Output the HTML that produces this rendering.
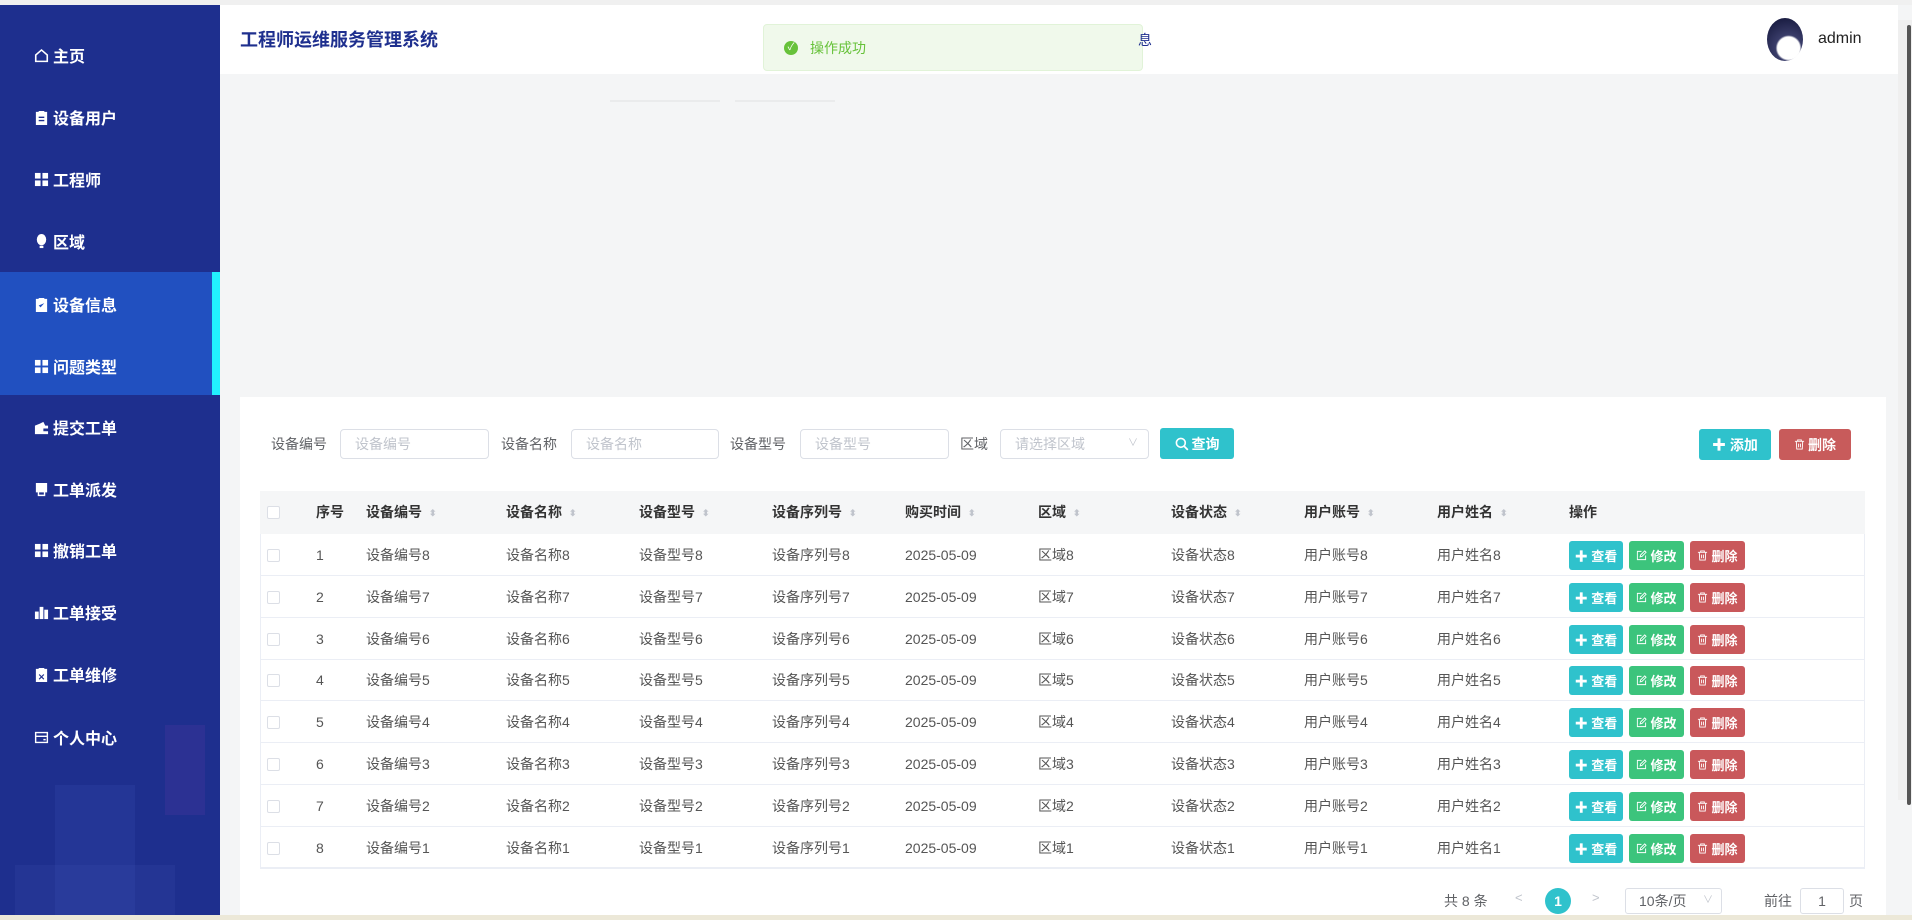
<!DOCTYPE html>
<html><head><meta charset="utf-8">
<style>
*{margin:0;padding:0;box-sizing:border-box}
body{width:1912px;height:920px;overflow:hidden;background:#f4f5f6;font-family:"Liberation Sans","Noto Sans CJK SC",sans-serif;position:relative;font-size:14px;color:#606266}
.a{position:absolute}
.mi{position:absolute;left:0;width:220px;height:30px;color:#fff;font-size:16px;font-weight:bold;display:flex;align-items:center;padding-left:34px;white-space:nowrap}
.mi svg{width:15px;height:15px;margin-right:4px;fill:#fff;flex:none}
.inp{position:absolute;top:429px;height:30px;border:1px solid #dcdfe6;border-radius:4px;background:#fff;color:#c0c4cc;font-size:14px;line-height:28px;padding-left:14px;white-space:nowrap}
.lbl{position:absolute;top:429px;font-size:14px;color:#606266;line-height:30px;white-space:nowrap}
.btn{position:absolute;color:#fff;border-radius:3px;font-weight:bold;font-size:14px;display:flex;align-items:center;justify-content:center;white-space:nowrap}
.th{position:absolute;top:503px;font-weight:bold;color:#333;font-size:14px;line-height:18px;white-space:nowrap}
.td{position:absolute;font-size:14px;color:#555;white-space:nowrap;line-height:18px}
.sm{position:absolute;height:29px;border-radius:3px;color:#fff;font-size:13px;font-weight:bold;display:flex;align-items:center;justify-content:center;white-space:nowrap}
.sm svg,.btn svg{width:11px;height:11px;margin-right:3px}
.cb{position:absolute;left:267px;width:13px;height:13px;border:1px solid #dcdfe6;border-radius:2px;background:#fff}
.s{display:inline-block;margin-left:7px;color:#c0c4cc;font-size:9px;vertical-align:1px}
</style></head><body>
<div class="a" style="left:0;top:0;width:1912px;height:5px;background:#f0f0f0"></div>
<div class="a" style="left:0;top:915px;width:1912px;height:5px;background:#ece8d8"></div>
<!-- sidebar -->
<div class="a" style="left:0;top:5px;width:220px;height:910px;background:#1e2f8e;overflow:hidden">
  <div class="a" style="left:0;top:267px;width:220px;height:123px;background:#2150c0"></div>
  <div class="a" style="left:212px;top:267px;width:8px;height:123px;background:#22f0ff"></div>
  <div class="a" style="left:55px;top:780px;width:80px;height:130px;background:rgba(80,100,200,.14)"></div>
  <div class="a" style="left:15px;top:860px;width:160px;height:50px;background:rgba(80,100,200,.12)"></div>
  <div class="a" style="left:165px;top:720px;width:40px;height:90px;background:rgba(110,60,170,.18)"></div>
</div>
<div class="mi" style="top:40px"><svg viewBox="0 0 16 16"><path d="M8 1L15 7V15H1V7ZM2.7 7.8V13.4H13.3V7.8L8 3.2Z" fill-rule="evenodd"/></svg>主页</div>
<div class="mi" style="top:102px"><svg viewBox="0 0 16 16"><path d="M2 2H5V1H11V2H14V16H2ZM5 7H11V8.5H5ZM5 10.5H11V12H5Z" fill-rule="evenodd"/></svg>设备用户</div>
<div class="mi" style="top:164px"><svg viewBox="0 0 16 16"><rect x="1" y="1" width="6" height="6"/><rect x="9" y="1" width="6" height="6"/><rect x="1" y="9" width="6" height="6"/><rect x="9" y="9" width="6" height="6"/></svg>工程师</div>
<div class="mi" style="top:226px"><svg viewBox="0 0 16 16"><ellipse cx="8" cy="6" rx="5" ry="6"/><rect x="6" y="12.5" width="4" height="2.5"/></svg>区域</div>
<div class="mi" style="top:289px"><svg viewBox="0 0 16 16"><path d="M2 2H5V1H11V2H14V16H2ZM5 9L7 11L11 6.5" fill-rule="evenodd"/></svg>设备信息</div>
<div class="mi" style="top:351px"><svg viewBox="0 0 16 16"><rect x="1" y="1" width="6" height="6"/><rect x="9" y="1" width="6" height="6"/><rect x="1" y="9" width="6" height="6"/><rect x="9" y="9" width="6" height="6"/></svg>问题类型</div>
<div class="mi" style="top:412px"><svg viewBox="0 0 16 16"><path d="M1 6H12L10 2L6 4ZM1 6H15V15H1ZM10 9H15V12H10Z" fill-rule="evenodd"/></svg>提交工单</div>
<div class="mi" style="top:474px"><svg viewBox="0 0 16 16"><path d="M2 1H14V11H2ZM4 11V15H12V11H10.5V13.5H5.5V11Z"/></svg>工单派发</div>
<div class="mi" style="top:535px"><svg viewBox="0 0 16 16"><rect x="1" y="1" width="6" height="6"/><rect x="9" y="1" width="6" height="6"/><rect x="1" y="9" width="6" height="6"/><rect x="9" y="9" width="6" height="6"/></svg>撤销工单</div>
<div class="mi" style="top:597px"><svg viewBox="0 0 16 16"><rect x="1" y="7" width="4" height="8"/><rect x="6" y="2" width="4" height="13"/><rect x="11" y="5" width="4" height="10"/></svg>工单接受</div>
<div class="mi" style="top:659px"><svg viewBox="0 0 16 16"><path d="M2 2H5V1H11V2H14V16H2Z"/><path d="M5.5 8L10.5 13M10.5 8L5.5 13" stroke="#1e2f8e" stroke-width="1.2"/></svg>工单维修</div>
<div class="mi" style="top:722px"><svg viewBox="0 0 16 16"><path d="M1 2H15V14H1ZM2.5 3.5V6H13.5V3.5ZM2.5 7.5V12.5H13.5V7.5ZM10 9.5H12.5V11H10Z" fill-rule="evenodd"/></svg>个人中心</div>

<!-- header -->
<div class="a" style="left:220px;top:5px;width:1678px;height:69px;background:#fff"></div>
<div class="a" style="left:240px;top:28px;font-size:18px;font-weight:bold;color:#1e2f8e;line-height:24px">工程师运维服务管理系统</div>
<div class="a" style="left:1767px;top:18px;width:36px;height:43px;border-radius:50%;background:radial-gradient(circle at 60% 70%,#fff 0 30%,#3a3d6a 35%,#1b1e44 80%)"></div>
<div class="a" style="left:1818px;top:30px;font-size:16px;color:#222">admin</div>
<div class="a" style="left:1898px;top:20px;width:14px;height:780px;background:#efefef"></div>
<div class="a" style="left:1907px;top:25px;width:4px;height:780px;background:#555;border-radius:2px"></div>
<div class="a" style="left:610px;top:100px;width:110px;height:2px;background:#eaebec"></div>
<div class="a" style="left:735px;top:100px;width:100px;height:2px;background:#eaebec"></div>

<!-- toast -->
<div class="a" style="left:763px;top:24px;width:380px;height:47px;background:#f0f9eb;border:1px solid #e1f3d8;border-radius:4px"></div>
<div class="a" style="left:784px;top:41px;width:14px;height:14px;border-radius:50%;background:#67c23a;color:#fff;font-size:10px;line-height:14px;text-align:center">✓</div>
<div class="a" style="left:810px;top:38px;font-size:14px;color:#67c23a">操作成功</div>
<div class="a" style="left:1138px;top:30px;font-size:14px;color:#1e2f8e">息</div>

<!-- card -->
<div class="a" style="left:240px;top:397px;width:1646px;height:518px;background:#fff"></div>
<div class="lbl" style="left:271px">设备编号</div><div class="inp" style="left:340px;width:149px">设备编号</div>
<div class="lbl" style="left:501px">设备名称</div><div class="inp" style="left:571px;width:148px">设备名称</div>
<div class="lbl" style="left:730px">设备型号</div><div class="inp" style="left:800px;width:149px">设备型号</div>
<div class="lbl" style="left:960px">区域</div><div class="inp" style="left:1000px;width:149px">请选择区域<span style="position:absolute;right:10px;font-size:10px">∨</span></div>
<div class="btn" style="left:1160px;top:428px;width:74px;height:31px;background:#2fc2cc"><svg viewBox="0 0 12 12" style="width:14px;height:14px"><circle cx="5" cy="5" r="3.8" fill="none" stroke="#fff" stroke-width="1.4"/><path d="M8 8L11 11" stroke="#fff" stroke-width="1.5"/></svg>查询</div>
<div class="btn" style="left:1699px;top:429px;width:72px;height:31px;background:#2fc2cc">✚ 添加</div>
<div class="btn" style="left:1779px;top:429px;width:72px;height:31px;background:#c85b5b"><svg viewBox="0 0 12 12"><path d="M1 2.5H11M4 2.5V1H8V2.5M2.5 2.5L3 11H9L9.5 2.5M5 5V9M7 5V9" fill="none" stroke="#fff" stroke-width="1"/></svg>删除</div>

<!-- table -->
<div class="a" style="left:260px;top:491px;width:1605px;height:377px;border:1px solid #ebeef5;border-top:none"></div>
<div class="a" style="left:260px;top:491px;width:1605px;height:43px;background:#f5f6f7"></div>
<div class="cb" style="top:506px"></div>
<div class="th" style="left:316px">序号</div>
<div class="th" style="left:366px">设备编号<span class="s">⬍</span></div>
<div class="th" style="left:506px">设备名称<span class="s">⬍</span></div>
<div class="th" style="left:639px">设备型号<span class="s">⬍</span></div>
<div class="th" style="left:772px">设备序列号<span class="s">⬍</span></div>
<div class="th" style="left:905px">购买时间<span class="s">⬍</span></div>
<div class="th" style="left:1038px">区域<span class="s">⬍</span></div>
<div class="th" style="left:1171px">设备状态<span class="s">⬍</span></div>
<div class="th" style="left:1304px">用户账号<span class="s">⬍</span></div>
<div class="th" style="left:1437px">用户姓名<span class="s">⬍</span></div>
<div class="th" style="left:1569px">操作</div>

<div id="rows"></div>
<script>
var h='';
var trash='<svg viewBox="0 0 12 12"><path d="M1 2.5H11M4 2.5V1H8V2.5M2.5 2.5L3 11H9L9.5 2.5M5 5V9M7 5V9" fill="none" stroke="#fff" stroke-width="1"/></svg>';
var edit='<svg viewBox="0 0 12 12"><path d="M6 1.5H1.5V10.5H10.5V6M4.5 7.5L5 5.5L9.5 1L11 2.5L6.5 7Z" fill="none" stroke="#fff" stroke-width="1"/></svg>';
for(var i=0;i<8;i++){
 var t=534+i*41.8, n=8-i, c=t+21;
 h+='<div class="a" style="left:260px;top:'+(t+41)+'px;width:1605px;height:1px;background:#ebeef5"></div>';
 h+='<div class="cb" style="top:'+(c-6)+'px"></div>';
 var cols=[[316,i+1],[366,'设备编号'+n],[506,'设备名称'+n],[639,'设备型号'+n],[772,'设备序列号'+n],[905,'2025-05-09'],[1038,'区域'+n],[1171,'设备状态'+n],[1304,'用户账号'+n],[1437,'用户姓名'+n]];
 cols.forEach(function(x){h+='<div class="td" style="left:'+x[0]+'px;top:'+(c-9)+'px">'+x[1]+'</div>';});
 h+='<div class="sm" style="left:1569px;top:'+(c-14)+'px;width:54px;background:#2fc2cc">✚ 查看</div>';
 h+='<div class="sm" style="left:1629px;top:'+(c-14)+'px;width:55px;background:#3cc47c">'+edit+'修改</div>';
 h+='<div class="sm" style="left:1690px;top:'+(c-14)+'px;width:55px;background:#c9585b">'+trash+'删除</div>';
}
document.getElementById('rows').innerHTML=h;
</script>

<!-- pagination -->
<div class="a" style="left:1444px;top:891px;font-size:14px;color:#606266">共 8 条</div>
<div class="a" style="left:1515px;top:890px;font-size:13px;color:#c0c4cc">&lt;</div>
<div class="a" style="left:1545px;top:888px;width:26px;height:26px;border-radius:50%;background:#2fc2cc;color:#fff;font-weight:bold;font-size:14px;line-height:26px;text-align:center">1</div>
<div class="a" style="left:1592px;top:890px;font-size:13px;color:#c0c4cc">&gt;</div>
<div class="a" style="left:1625px;top:888px;width:97px;height:26px;border:1px solid #dcdfe6;border-radius:3px;font-size:14px;line-height:24px;padding-left:13px;color:#606266">10条/页<span style="position:absolute;right:8px;color:#c0c4cc;font-size:10px">∨</span></div>
<div class="a" style="left:1764px;top:891px;font-size:14px;color:#606266">前往</div>
<div class="a" style="left:1800px;top:888px;width:44px;height:26px;border:1px solid #dcdfe6;border-radius:3px;font-size:14px;line-height:24px;text-align:center;color:#606266">1</div>
<div class="a" style="left:1849px;top:891px;font-size:14px;color:#606266">页</div>
</body></html>
